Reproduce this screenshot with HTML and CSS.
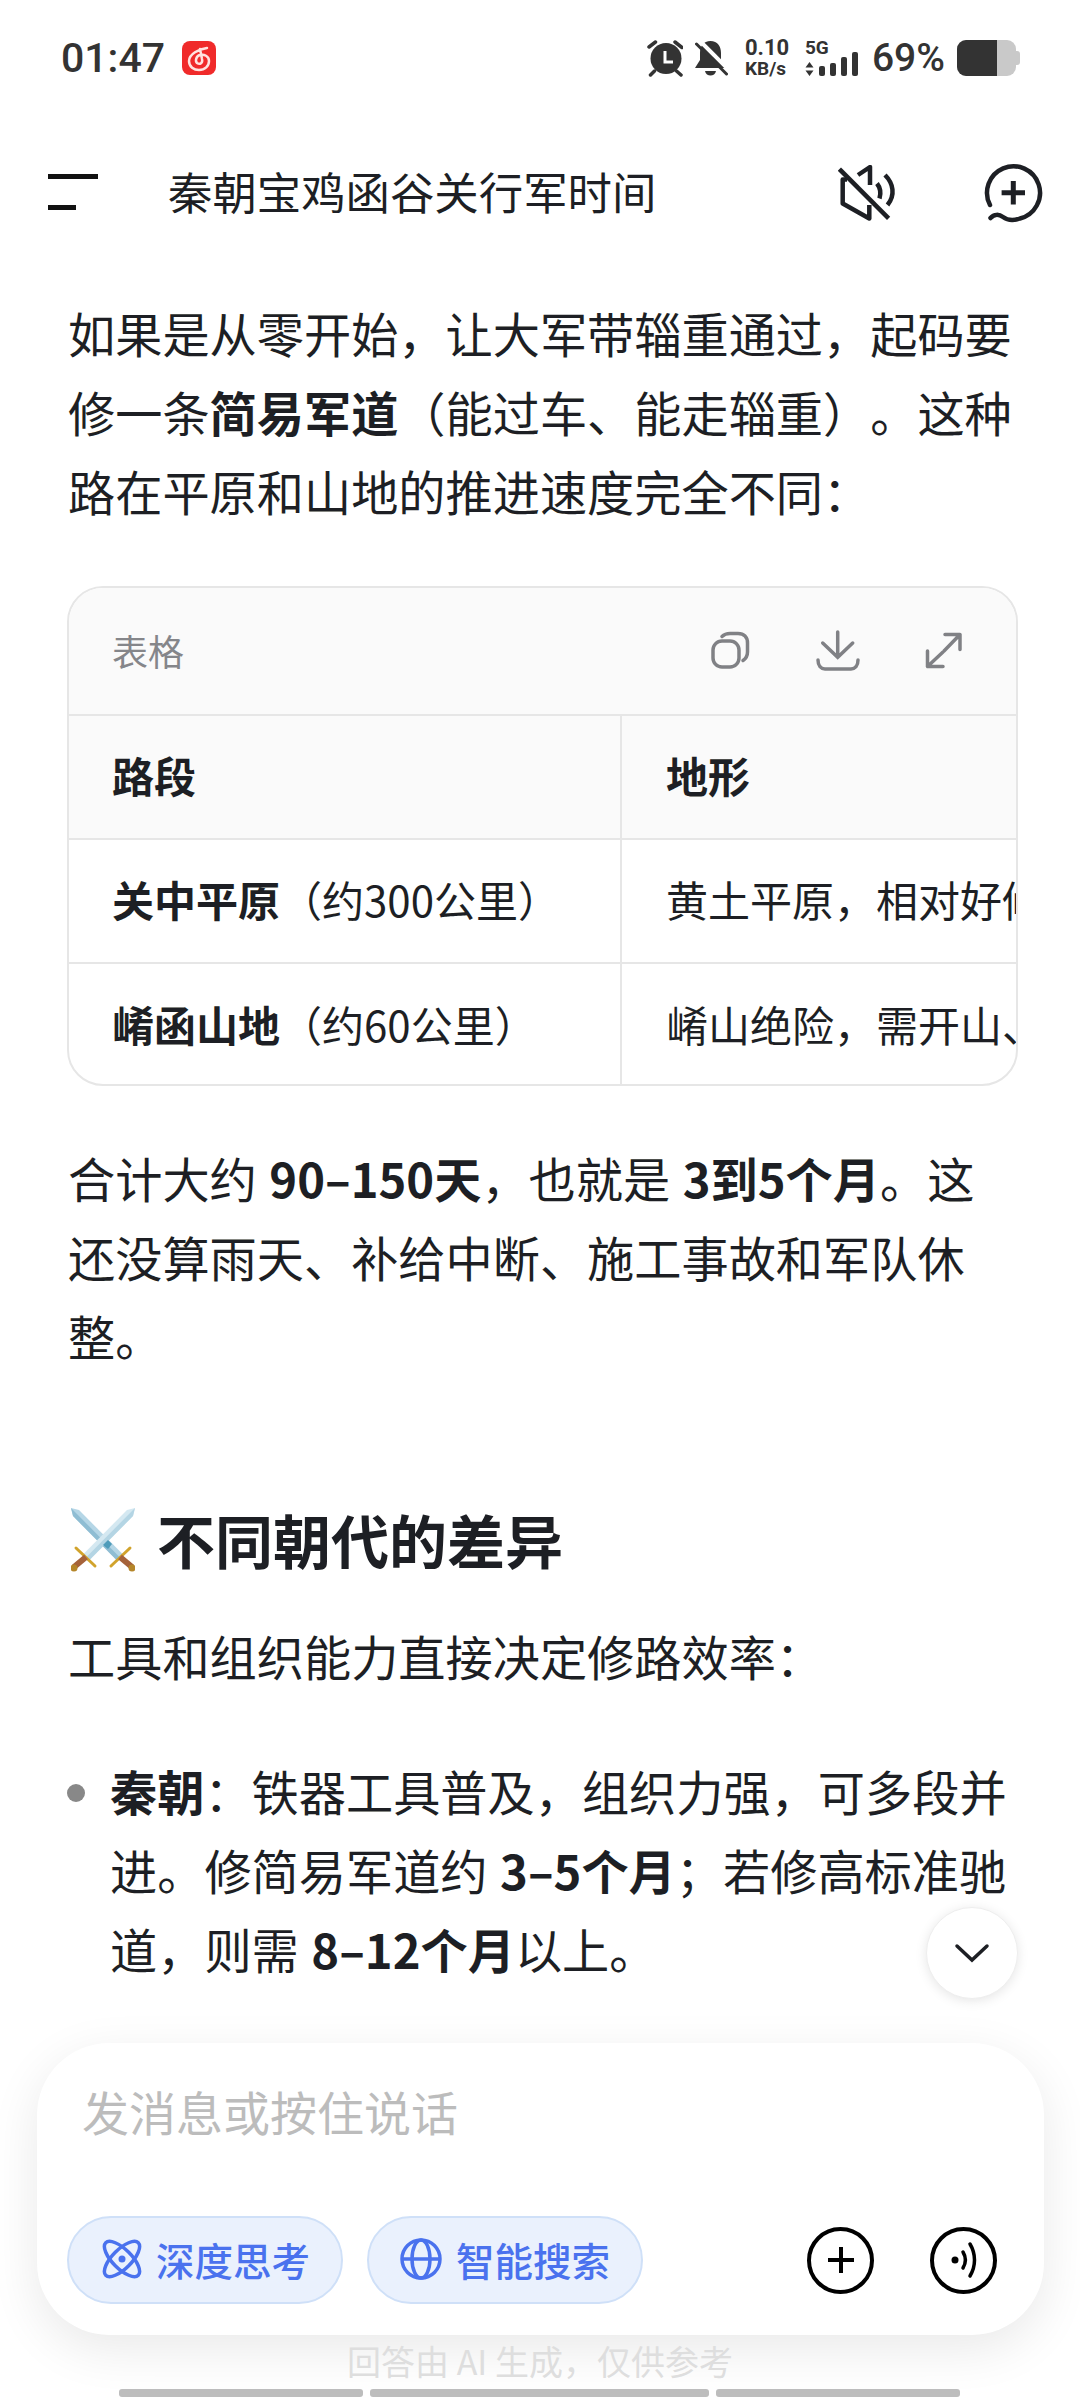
FILE: index.html
```html
<!DOCTYPE html>
<html lang="zh-CN">
<head>
    <meta charset="UTF-8">
    <meta name="viewport" content="width=device-width, initial-scale=1.0">
    <title>秦朝宝鸡函谷关行军时间</title>
    <link rel="stylesheet" href="styles.css">
</head>
<body>
    <div class="phone">
        <div class="status-bar">
            <div class="status-left">
                <span class="clock">01:47</span>
                <svg class="netease" width="34" height="34" viewBox="0 0 34 34">
                    <rect width="34" height="34" rx="8" fill="#f02a2a"/>
                    <path d="M25 7C17 8 7 13 7 20c0 6 5 9 10 9 6 0 10-4 10-9 0-5-5-7-9-6-4 1-5 6-3 8 3 2 6 0 5-4l-2-10" fill="none" stroke="#ffe3e0" stroke-width="2.500" stroke-linecap="round"/>
                </svg>
            </div>
            <div class="status-right">
                <svg class="alarm" width="36" height="37" viewBox="0 0 36 37">
                    <circle cx="19" cy="18.500" r="15.500" fill="#333"/>
                    <path d="M18 11v11h8" fill="none" stroke="#fff" stroke-width="3"/>
                    <path d="M2 7l6.500-5M28 2l7 5.500M3.500 35l4-4M29.500 31l4.500 4" stroke="#333" stroke-width="3.500" stroke-linecap="round"/>
                </svg>
                <svg class="bell" width="33" height="36" viewBox="0 0 33 36">
                    <path d="M15.500 1c7 0 10.500 5 10.500 12v7l6 8H0l5-8v-7C5 6 8.500 1 15.500 1zM10 31h11c-1 6-10 6-11 0z" fill="#333"/>
                    <path d="M5 1l30 30" stroke="#fff" stroke-width="4"/>
                    <path d="M1.500 4l30 30" stroke="#333" stroke-width="3" stroke-linecap="round"/>
                </svg>
                <div class="net-speed"><span class="speed-num">0.10</span><span class="speed-unit">KB/s</span></div>
                <div class="signal">
                    <span class="five-g">5G</span>
                    <div class="signal-bars">
                        <svg class="updown" width="9" height="14" viewBox="0 0 9 14"><path d="M4.500 0l4 5.500H.5zM4.500 14l4-5.500H.5z" fill="#333"/></svg>
                        <i class="bar b1"></i><i class="bar b2"></i><i class="bar b3"></i><i class="bar b4"></i>
                    </div>
                </div>
                <span class="battery-text">69%</span>
                <div class="battery"><div class="battery-body"><div class="battery-level"></div></div><div class="battery-nub"></div></div>
            </div>
        </div>

        <header class="top-bar">
            <div class="menu-icon"><i class="menu-long"></i><i class="menu-short"></i></div>
            <h1 class="chat-title">秦朝宝鸡函谷关行军时间</h1>
            <svg class="mute-icon" width="58" height="58" viewBox="0 0 58 58">
                <g fill="none" stroke="#1d1f24" stroke-width="4.500" stroke-linejoin="round">
                    <path d="M9 14.500H4.700v24l26.600 15V40"/>
                    <path d="M20 10L32 2v18"/>
                    <path d="M3 5.700l46 46" stroke-linecap="square"/>
                    <path d="M39 18.500c3.500 4.500 4 10 2.500 15"/>
                    <path d="M47 10c8.500 8.500 10.500 20 2.500 30"/>
                </g>
            </svg>
            <svg class="new-chat-icon" width="62" height="64" viewBox="0 0 62 64">
                <path d="M7 43A26.500 26.500 0 1 1 37 56.500C30 59 24 58 20 55 16 52 11 52 7.500 56" fill="none" stroke="#1d1f24" stroke-width="4.500" stroke-linecap="round"/>
                <path d="M30.300 19v23.400M18.600 30.700H42" stroke="#1d1f24" stroke-width="5"/>
            </svg>
        </header>

        <main class="content">
            <p class="para">如果是从零开始，让大军带辎重通过，起码要修一条<b>简易军道</b>（能过车、能走辎重）。这种路在平原和山地的推进速度完全不同：</p>

            <div class="table-card">
                <div class="table-head">
                    <span class="table-label">表格</span>
                    <div class="table-tools">
                        <svg width="40" height="40" viewBox="0 0 40 40">
                            <rect x="2" y="10" width="26" height="26" rx="9" fill="none" stroke="#808185" stroke-width="3.500"/>
                            <path d="M11 5.500C13 3.500 15 2.500 19 2.500h8c6 0 9.500 3.500 9.500 9.500v9c0 4-1.500 6.500-4.500 8.500" fill="none" stroke="#808185" stroke-width="3.500" stroke-linecap="round"/>
                        </svg>
                        <svg width="44" height="42" viewBox="0 0 44 42">
                            <path d="M21.700 2v25M6.700 13l15 14.300 15-14.300" fill="none" stroke="#808185" stroke-width="3.500" stroke-linecap="round"/>
                            <path d="M2 30c0 6 3 9 7 9h26c4 0 7-3 7-9" fill="none" stroke="#808185" stroke-width="3.500" stroke-linecap="round"/>
                        </svg>
                        <svg width="38" height="40" viewBox="0 0 38 40">
                            <path d="M20 3.500h15v15M35 3.500L19 20M2.500 20v15.500H18M2.500 35.500L18 21" fill="none" stroke="#808185" stroke-width="3.500" stroke-linecap="round" stroke-linejoin="round"/>
                        </svg>
                    </div>
                </div>
                <div class="table-row row-head">
                    <div class="cell-a"><b>路段</b></div>
                    <div class="cell-b"><b>地形</b></div>
                </div>
                <div class="table-row">
                    <div class="cell-a"><b>关中平原</b>（约300公里）</div>
                    <div class="cell-b">黄土平原，相对好修，进度较快</div>
                </div>
                <div class="table-row">
                    <div class="cell-a"><b>崤函山地</b>（约60公里）</div>
                    <div class="cell-b">崤山绝险，需开山、架桥、修栈道</div>
                </div>
            </div>

            <p class="para after-table">合计大约 <b>90–150天</b>，也就是 <b>3到5个月</b>。这还没算雨天、补给中断、施工事故和军队休整。</p>

            <h2 class="section-title">
                <svg class="swords" width="64" height="65" viewBox="0 0 64 65">
                    <!-- sword going down to the right sits behind -->
                    <path d="M0 1l8 2 43.500 44-6 6L2 9z" fill="#b5d6e6"/>
                    <path d="M0 1l48.500 49-3 3L2 9z" fill="#8fbdd3"/>
                    <path d="M59 41L40 59" stroke="#d1a32c" stroke-width="3" stroke-linecap="round"/>
                    <path d="M49 50l12 10" stroke="#a5623a" stroke-width="6"/>
                    <circle cx="61" cy="61" r="3.500" fill="#b5862a"/>
                    <!-- sword going down to the left on top -->
                    <path d="M64 1l-8 2-43.500 44 6 6L62 9z" fill="#d4e8f1"/>
                    <path d="M64 1L15.500 50l3 3L62 9z" fill="#b4d5e4"/>
                    <path d="M32 38l5-5 4 4-4 5z" fill="#4f9cba"/>
                    <path d="M5 41l19 18" stroke="#d1a32c" stroke-width="3" stroke-linecap="round"/>
                    <path d="M15 50L3 60" stroke="#a5623a" stroke-width="6"/>
                    <circle cx="3" cy="61" r="3.500" fill="#b5862a"/>
                </svg>
                <span>不同朝代的差异</span>
            </h2>

            <p class="para">工具和组织能力直接决定修路效率：</p>

            <ul class="dynasty-list">
                <li><b>秦朝</b>：铁器工具普及，组织力强，可多段并进。修简易军道约 <b>3–5个月</b>；若修高标准驰道，则需 <b>8–12个月</b>以上。</li>
            </ul>
        </main>

        <button class="scroll-down">
            <svg width="36" height="20" viewBox="0 0 36 20"><path d="M3 3l15 14L33 3" fill="none" stroke="#1d1f24" stroke-width="3.500" stroke-linecap="round"/></svg>
        </button>

        <div class="bottom-fade"></div>

        <div class="composer">
            <div class="placeholder">发消息或按住说话</div>
            <div class="composer-row">
                <div class="chip">
                    <svg width="40" height="40" viewBox="0 0 40 40">
                        <g fill="none" stroke="#4a72ee" stroke-width="3.500">
                            <ellipse cx="20" cy="20" rx="9.500" ry="23" transform="rotate(-45 20 20)"/>
                            <ellipse cx="20" cy="20" rx="9.500" ry="23" transform="rotate(45 20 20)"/>
                        </g>
                        <circle cx="20" cy="20" r="3.500" fill="#4a72ee"/>
                    </svg>
                    <span>深度思考</span>
                </div>
                <div class="chip chip-search">
                    <svg width="42" height="42" viewBox="0 0 42 42">
                        <g fill="none" stroke="#4a72ee" stroke-width="3.500">
                            <circle cx="21" cy="21" r="19"/>
                            <ellipse cx="21" cy="21" rx="9" ry="19"/>
                            <path d="M2 21h38"/>
                        </g>
                    </svg>
                    <span>智能搜索</span>
                </div>
                <div class="composer-actions">
                    <div class="round-btn">
                        <svg width="36" height="36" viewBox="0 0 36 36"><path d="M18 5v26M5 18h26" stroke="#000" stroke-width="4"/></svg>
                    </div>
                    <div class="round-btn">
                        <svg width="36" height="40" viewBox="0 0 36 40">
                            <circle cx="9" cy="20" r="3.500" fill="#000"/>
                            <path d="M17 12c3 5 3 11 0 16M24 4c6 10 6 22 0 32" fill="none" stroke="#000" stroke-width="3.500" stroke-linecap="round"/>
                        </svg>
                    </div>
                </div>
            </div>
        </div>

        <div class="disclaimer">回答由 AI 生成，仅供参考</div>
        <div class="progress-bars"><i class="seg1"></i><i class="seg2"></i><i class="seg3"></i></div>
    </div>
</body>
</html>
```

FILE: styles.css
```css
* {
    box-sizing: border-box;
}

body {
    margin: 0;
    background-color: #fff;
    color: #1d1f24;
    font-family: "Noto Sans CJK SC", "Noto Sans", sans-serif;
    text-spacing-trim: space-all;
}

.phone {
    position: relative;
    width: 1080px;
    height: 2400px;
    overflow: hidden;
    background-color: #fff;
}

/* status bar */
.status-bar {
    display: flex;
    justify-content: space-between;
    align-items: center;
    height: 58px;
    margin-top: 29px;
    padding: 0 60px 0 61px;
    color: #333;
    font-family: Roboto, sans-serif;
}

.status-left,
.status-right {
    display: flex;
    align-items: center;
}

.clock {
    font-size: 41px;
    font-weight: 500;
}

.netease {
    margin-left: 17px;
}

.bell {
    margin-left: 12px;
}

.net-speed {
    display: flex;
    flex-direction: column;
    width: 42px;
    margin-left: 17px;
    font-weight: 700;
    line-height: 21px;
    white-space: nowrap;
}

.speed-num {
    font-size: 22px;
}

.speed-unit {
    font-size: 19px;
}

.signal {
    display: flex;
    flex-direction: column;
    width: 54px;
    margin-left: 18px;
}

.five-g {
    font-size: 19px;
    font-weight: 700;
    line-height: 16px;
}

.signal-bars {
    display: flex;
    align-items: flex-end;
    gap: 5px;
    height: 24px;
    margin-top: -4px;
}

.bar {
    width: 6px;
    border-radius: 2px;
    background-color: #333;
}

.b1 { height: 10px; }
.b2 { height: 13px; }
.b3 { height: 19px; }
.b4 { height: 24px; }

.battery-text {
    margin-left: 13px;
    font-size: 39px;
    font-weight: 500;
}

.battery {
    display: flex;
    align-items: center;
    margin-left: 12px;
}

.battery-body {
    width: 59px;
    height: 36px;
    border-radius: 9px;
    background-color: #c9c9c9;
    overflow: hidden;
}

.battery-level {
    width: 40px;
    height: 100%;
    background-color: #333;
}

.battery-nub {
    width: 4px;
    height: 14px;
    border-radius: 0 3px 3px 0;
    background-color: #c9c9c9;
}

/* top bar */
.top-bar {
    display: flex;
    align-items: center;
    height: 106px;
    margin-top: 52px;
    padding: 0 35px 0 48px;
}

.menu-icon {
    display: flex;
    flex-direction: column;
    width: 50px;
    height: 36px;
    justify-content: space-between;
}

.menu-icon i {
    display: block;
    height: 5px;
    background-color: #111;
}

.menu-short {
    width: 28px;
}

.chat-title {
    flex: 1;
    margin: 0 0 2px 70px;
    font-size: 44.4px;
    font-weight: 400;
    line-height: 58px;
}

.mute-icon {
    margin-top: 4px;
    margin-right: 87px;
}

.new-chat-icon {
    margin-top: 4px;
}

/* conversation */
.content {
    padding: 0 62px 0 68px;
}

.para {
    margin: 0;
    font-size: 47.2px;
    line-height: 79px;
    word-spacing: 2px;
}

.content > .para:first-child {
    margin-top: 48px;
}

.table-card {
    width: 951px;
    height: 500px;
    margin-top: 56px;
    margin-left: -1px;
    border: 2px solid #e6e6e6;
    border-radius: 36px;
    overflow: hidden;
}

.table-head {
    display: flex;
    justify-content: space-between;
    align-items: center;
    height: 128px;
    padding: 0 53px 0 43px;
    background-color: #fafafa;
    border-bottom: 2px solid #e6e6e6;
}

.table-label {
    margin-bottom: 2px;
    font-size: 36px;
    color: #85868a;
}

.table-tools {
    display: flex;
    align-items: center;
    gap: 65px;
}

.table-row {
    display: flex;
    height: 124px;
    border-bottom: 2px solid #e6e6e6;
    font-size: 42px;
    white-space: nowrap;
}

.table-row:last-child {
    border-bottom: none;
}

.row-head {
    background-color: #fafafa;
}

.cell-a {
    display: flex;
    align-items: center;
    flex-shrink: 0;
    width: 553px;
    padding: 0 0 5px 43px;
    border-right: 2px solid #e6e6e6;
}

.cell-b {
    display: flex;
    align-items: center;
    padding: 0 0 5px 44px;
}

.after-table {
    margin-top: 52px;
}

.section-title {
    display: flex;
    align-items: center;
    gap: 22px;
    margin: 124px 0 0 3px;
    font-size: 58px;
    font-weight: 700;
    line-height: 80px;
}

.section-title + .para {
    margin-top: 37px;
}

.dynasty-list {
    margin: 56px 0 0;
    padding: 0 0 0 42px;
    font-size: 47.2px;
    line-height: 79px;
    word-spacing: 2px;
}

.dynasty-list li::marker {
    color: #888;
}

/* floating stuff */
.scroll-down {
    position: absolute;
    left: 926px;
    top: 1907px;
    display: flex;
    justify-content: center;
    align-items: center;
    width: 92px;
    height: 92px;
    border: 1px solid #eee;
    border-radius: 50%;
    background-color: #fff;
    box-shadow: 0 2px 12px rgba(0, 0, 0, 0.1);
}

.bottom-fade {
    position: absolute;
    left: 0;
    top: 2000px;
    width: 1080px;
    height: 400px;
    background: linear-gradient(to bottom, rgba(255, 255, 255, 0), #fff 40px);
}

.composer {
    position: absolute;
    left: 37px;
    top: 2043px;
    width: 1007px;
    height: 292px;
    padding: 0 30px;
    border-radius: 72px;
    background-color: #fff;
    box-shadow: 0 14px 50px rgba(0, 0, 0, 0.09);
}

.placeholder {
    margin-top: 33px;
    margin-left: 15px;
    font-size: 47px;
    line-height: 70px;
    color: #bcbcbc;
}

.composer-row {
    display: flex;
    align-items: center;
    margin-top: 70px;
    gap: 24px;
}

.chip {
    display: flex;
    align-items: center;
    gap: 14px;
    width: 276px;
    height: 88px;
    padding: 0 0 2px 33px;
    border: 2px solid #cfe0f8;
    border-radius: 44px;
    background-color: #eaf1fd;
    color: #4a72ee;
    font-size: 38.5px;
    font-weight: 500;
    white-space: nowrap;
}

.chip-search {
    padding-left: 31px;
}

.composer-actions {
    display: flex;
    gap: 56px;
    margin-left: auto;
    margin-right: 17px;
}

.round-btn {
    display: flex;
    justify-content: center;
    align-items: center;
    width: 67px;
    height: 67px;
    border: 4px solid #000;
    border-radius: 50%;
}

.disclaimer {
    position: absolute;
    left: 0;
    top: 2336px;
    width: 100%;
    text-align: center;
    font-size: 34px;
    color: #dedede;
}

.progress-bars {
    position: absolute;
    left: 119px;
    top: 2389px;
    display: flex;
    gap: 7px;
}

.progress-bars i {
    display: block;
    height: 8px;
    border-radius: 3px;
    background-color: #bdbdbd;
}

.seg1 { width: 244px; }
.seg2 { width: 339px; }
.seg3 { width: 244px; }
```
